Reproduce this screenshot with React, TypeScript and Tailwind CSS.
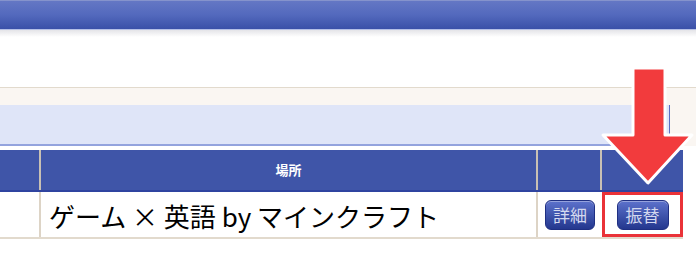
export default function App() {
  return (
    <div className="relative w-[696px] h-[253px] overflow-hidden bg-white" style={{ fontFamily: '"Noto Sans CJK JP", "Noto Sans", sans-serif' }}>
      {/* top bar */}
      <div className="h-[30px] bg-gradient-to-b from-[#6477c4] via-[#5369bd] to-[#3a50a8] border-t border-[#8593cc] border-b border-b-[#b4bfe6]" />
      <div className="h-[7px] bg-gradient-to-b from-[#e4e4e8] to-white" />
      <div className="h-[50px]" />

      {/* beige panel with light blue box */}
      <div className="border-t border-[#e2dacd] bg-[#faf6f2] pt-[17px]">
        <div className="w-[670px] h-[41px] bg-[#dfe5f8] border-b-2 border-[#93a3de] border-r border-r-[#5b6fc4]" />
      </div>
      <div className="h-[4px]" />

      {/* table */}
      <div className="w-[683px] border-b-2 border-[#e2dacd]">
        <div className="flex h-[42px] bg-[#3f55a8] border-b-2 border-[#2f44a0] text-white text-[13px] font-bold">
          <div className="w-[41px] border-r-2 border-[#c8c0b4]" />
          <div className="w-[497px] border-r-2 border-[#c8c0b4] flex items-center justify-center">場所</div>
          <div className="w-[64px] border-r-2 border-[#c8c0b4]" />
          <div className="flex-1" />
        </div>
        <div className="flex h-[45px]">
          <div className="w-[41px] border-r-2 border-[#ddd4c6]" />
          <div className="w-[497px] border-r-2 border-[#ddd4c6] flex items-center pl-[8px] pt-[3px] text-[26px] text-black leading-none">
            ゲーム × 英語 by マインクラフト
          </div>
          <div className="w-[64px] flex items-center justify-center">
            <button className="w-[50px] h-[30px] rounded-[6px] border border-[#1f2f82] bg-gradient-to-b from-[#5d72cc] to-[#24378e] text-[#d4d9ef] text-[17px] leading-none shadow-[inset_0_1px_0_rgba(255,255,255,0.35)]">
              詳細
            </button>
          </div>
          <div className="flex-1 border-[3px] border-[#ea3238] flex items-center justify-center">
            <button className="w-[52px] h-[30px] rounded-[6px] border border-[#1f2f82] bg-gradient-to-b from-[#5d72cc] to-[#24378e] text-[#d4d9ef] text-[17px] leading-none shadow-[inset_0_1px_0_rgba(255,255,255,0.35)]">
              振替
            </button>
          </div>
        </div>
      </div>

      {/* arrow overlay */}
      <svg className="absolute left-0 top-0" width="696" height="253" viewBox="0 0 696 253">
        <path
          d="M633 68 L665 68 L665 135 L692 135 L648 183 L603 135 L633 135 Z"
          fill="#f23b3d"
          stroke="#ffffff"
          strokeWidth="3"
          strokeLinejoin="round"
        />
      </svg>
    </div>
  );
}
